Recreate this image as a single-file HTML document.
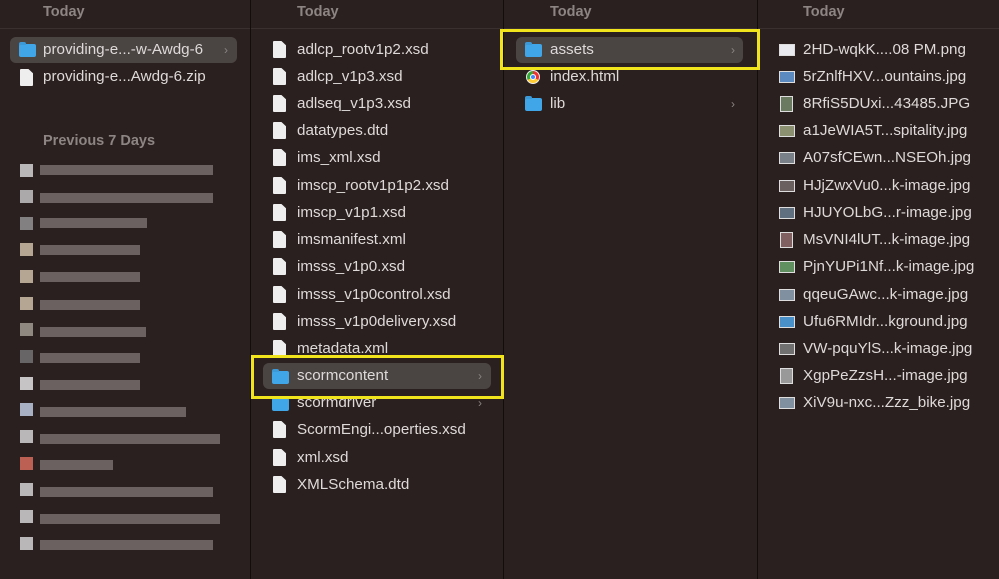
<!DOCTYPE html>
<html><head><meta charset="utf-8"><style>
*{margin:0;padding:0;box-sizing:border-box}
body{width:999px;height:579px;background:#2a201f;position:relative;overflow:hidden;font-family:"Liberation Sans",sans-serif;color:#dedad9;font-size:15.2px}
.a{position:absolute}
.h{font-weight:bold;color:#8d8584;font-size:14.5px}
.t{position:absolute;line-height:18px;white-space:nowrap}
.div{position:absolute;top:0;width:1px;height:579px;background:#120c0b}
.doc{position:absolute;width:13px;height:17px;background:#eeeeee;clip-path:polygon(0 0,65% 0,100% 25%,100% 100%,0 100%);border-radius:1px}
.fold{position:absolute;width:17px;height:13px;background:#41a6e8;border-radius:2px}
.fold:before{content:"";position:absolute;left:0;top:-2px;width:7px;height:3px;background:#3b99d8;border-radius:2px 2px 0 0}
.sel{position:absolute;background:#4a4443;border-radius:6px;height:26px}
.chev{position:absolute;color:#8a8382;font-size:12px;line-height:18px}
.yb{position:absolute;border:3px solid #f2e41c}
.th{position:absolute;width:16px;height:12px;border:1px solid #ddd;background:#8899aa}
.bl{position:absolute;height:10px;background:#7a7271;opacity:.8}
</style></head><body>
<div class="a" style="left:0;top:28px;width:999px;height:1px;background:#3a302f"></div>
<div class="div" style="left:250px"></div>
<div class="div" style="left:503px"></div>
<div class="div" style="left:757px"></div>
<div class="t h" style="left:43px;top:3px">Today</div>
<div class="t h" style="left:297px;top:3px">Today</div>
<div class="t h" style="left:550px;top:3px">Today</div>
<div class="t h" style="left:803px;top:3px">Today</div>

<div class="sel" style="left:10px;top:37px;width:227px"></div>
<div class="fold" style="left:19px;top:44px"></div>
<div class="t" style="left:43px;top:41px">providing-e...-w-Awdg-6</div>
<div class="chev" style="left:224px;top:41px">›</div>
<div class="doc" style="left:20px;top:69px"></div>
<div class="t" style="left:43px;top:68px">providing-e...Awdg-6.zip</div>
<div class="t h" style="left:43px;top:132px">Previous 7 Days</div>

<div class="bl" style="left:20px;top:164px;width:13px;height:13px;background:#ddd"></div><div class="bl" style="left:40px;top:165px;width:173px"></div>
<div class="bl" style="left:20px;top:190px;width:13px;height:13px;background:#ccc"></div><div class="bl" style="left:40px;top:193px;width:173px"></div>
<div class="bl" style="left:20px;top:217px;width:13px;height:13px;background:#999"></div><div class="bl" style="left:40px;top:218px;width:107px"></div>
<div class="bl" style="left:20px;top:243px;width:13px;height:13px;background:#d8c8b0"></div><div class="bl" style="left:40px;top:245px;width:100px"></div>
<div class="bl" style="left:20px;top:270px;width:13px;height:13px;background:#d8c8b0"></div><div class="bl" style="left:40px;top:272px;width:100px"></div>
<div class="bl" style="left:20px;top:297px;width:13px;height:13px;background:#d8c8b0"></div><div class="bl" style="left:40px;top:300px;width:100px"></div>
<div class="bl" style="left:20px;top:323px;width:13px;height:13px;background:#a8a298"></div><div class="bl" style="left:40px;top:327px;width:106px"></div>
<div class="bl" style="left:20px;top:350px;width:13px;height:13px;background:#777"></div><div class="bl" style="left:40px;top:353px;width:100px"></div>
<div class="bl" style="left:20px;top:377px;width:13px;height:13px;background:#eee"></div><div class="bl" style="left:40px;top:380px;width:100px"></div>
<div class="bl" style="left:20px;top:403px;width:13px;height:13px;background:#c8d4ee"></div><div class="bl" style="left:40px;top:407px;width:146px"></div>
<div class="bl" style="left:20px;top:430px;width:13px;height:13px;background:#ddd"></div><div class="bl" style="left:40px;top:434px;width:180px"></div>
<div class="bl" style="left:20px;top:457px;width:13px;height:13px;background:#e07060"></div><div class="bl" style="left:40px;top:460px;width:73px"></div>
<div class="bl" style="left:20px;top:483px;width:13px;height:13px;background:#ddd"></div><div class="bl" style="left:40px;top:487px;width:173px"></div>
<div class="bl" style="left:20px;top:510px;width:13px;height:13px;background:#ddd"></div><div class="bl" style="left:40px;top:514px;width:180px"></div>
<div class="bl" style="left:20px;top:537px;width:13px;height:13px;background:#ddd"></div><div class="bl" style="left:40px;top:540px;width:173px"></div>

<div class="doc" style="left:273px;top:41px"></div><div class="t" style="left:297px;top:41px">adlcp_rootv1p2.xsd</div>
<div class="doc" style="left:273px;top:68px"></div><div class="t" style="left:297px;top:68px">adlcp_v1p3.xsd</div>
<div class="doc" style="left:273px;top:95px"></div><div class="t" style="left:297px;top:95px">adlseq_v1p3.xsd</div>
<div class="doc" style="left:273px;top:122px"></div><div class="t" style="left:297px;top:122px">datatypes.dtd</div>
<div class="doc" style="left:273px;top:149px"></div><div class="t" style="left:297px;top:149px">ims_xml.xsd</div>
<div class="doc" style="left:273px;top:177px"></div><div class="t" style="left:297px;top:177px">imscp_rootv1p1p2.xsd</div>
<div class="doc" style="left:273px;top:204px"></div><div class="t" style="left:297px;top:204px">imscp_v1p1.xsd</div>
<div class="doc" style="left:273px;top:231px"></div><div class="t" style="left:297px;top:231px">imsmanifest.xml</div>
<div class="doc" style="left:273px;top:258px"></div><div class="t" style="left:297px;top:258px">imsss_v1p0.xsd</div>
<div class="doc" style="left:273px;top:286px"></div><div class="t" style="left:297px;top:286px">imsss_v1p0control.xsd</div>
<div class="doc" style="left:273px;top:313px"></div><div class="t" style="left:297px;top:313px">imsss_v1p0delivery.xsd</div>
<div class="doc" style="left:273px;top:340px"></div><div class="t" style="left:297px;top:340px">metadata.xml</div>
<div class="sel" style="left:263px;top:363px;width:228px"></div>
<div class="fold" style="left:272px;top:371px"></div><div class="t" style="left:297px;top:367px">scormcontent</div><div class="chev" style="left:478px;top:367px">›</div>
<div class="fold" style="left:272px;top:398px"></div><div class="t" style="left:297px;top:394px">scormdriver</div><div class="chev" style="left:478px;top:394px">›</div>
<div class="doc" style="left:273px;top:421px"></div><div class="t" style="left:297px;top:421px">ScormEngi...operties.xsd</div>
<div class="doc" style="left:273px;top:449px"></div><div class="t" style="left:297px;top:449px">xml.xsd</div>
<div class="doc" style="left:273px;top:476px"></div><div class="t" style="left:297px;top:476px">XMLSchema.dtd</div>

<div class="sel" style="left:516px;top:37px;width:227px"></div>
<div class="fold" style="left:525px;top:44px"></div><div class="t" style="left:550px;top:41px">assets</div><div class="chev" style="left:731px;top:41px">›</div>
<div class="a" style="left:526px;top:70px;width:14px;height:14px;border-radius:50%;background:conic-gradient(#e33 0 120deg,#fc3 120deg 240deg,#3a3 240deg);border:1px solid #eee"><div class="a" style="left:3px;top:3px;width:6px;height:6px;border-radius:50%;background:#48f;border:1px solid #fff"></div></div>
<div class="t" style="left:550px;top:68px">index.html</div>
<div class="fold" style="left:525px;top:98px"></div><div class="t" style="left:550px;top:95px">lib</div><div class="chev" style="left:731px;top:95px">›</div>

<div class="th" style="left:779px;top:44px;background:#e8eaf0"></div><div class="t" style="left:803px;top:41px">2HD-wqkK....08 PM.png</div>
<div class="th" style="left:779px;top:71px;background:#5a8ac0"></div><div class="t" style="left:803px;top:68px">5rZnlfHXV...ountains.jpg</div>
<div class="th" style="left:780px;top:96px;width:13px;height:16px;background:#6a7a60"></div><div class="t" style="left:803px;top:95px">8RfiS5DUxi...43485.JPG</div>
<div class="th" style="left:779px;top:125px;background:#8a9070"></div><div class="t" style="left:803px;top:122px">a1JeWIA5T...spitality.jpg</div>
<div class="th" style="left:779px;top:152px;background:#7a8088"></div><div class="t" style="left:803px;top:149px">A07sfCEwn...NSEOh.jpg</div>
<div class="th" style="left:779px;top:180px;background:#6a6060"></div><div class="t" style="left:803px;top:177px">HJjZwxVu0...k-image.jpg</div>
<div class="th" style="left:779px;top:207px;background:#607080"></div><div class="t" style="left:803px;top:204px">HJUYOLbG...r-image.jpg</div>
<div class="th" style="left:780px;top:232px;width:13px;height:16px;background:#806060"></div><div class="t" style="left:803px;top:231px">MsVNI4lUT...k-image.jpg</div>
<div class="th" style="left:779px;top:261px;background:#609060"></div><div class="t" style="left:803px;top:258px">PjnYUPi1Nf...k-image.jpg</div>
<div class="th" style="left:779px;top:289px;background:#8090a0"></div><div class="t" style="left:803px;top:286px">qqeuGAwc...k-image.jpg</div>
<div class="th" style="left:779px;top:316px;background:#4a90c8"></div><div class="t" style="left:803px;top:313px">Ufu6RMIdr...kground.jpg</div>
<div class="th" style="left:779px;top:343px;background:#707070"></div><div class="t" style="left:803px;top:340px">VW-pquYlS...k-image.jpg</div>
<div class="th" style="left:780px;top:368px;width:13px;height:16px;background:#999"></div><div class="t" style="left:803px;top:367px">XgpPeZzsH...-image.jpg</div>
<div class="th" style="left:779px;top:397px;background:#8090a0"></div><div class="t" style="left:803px;top:394px">XiV9u-nxc...Zzz_bike.jpg</div>

<div class="yb" style="left:500px;top:29px;width:260px;height:41px"></div>
<div class="yb" style="left:251px;top:355px;width:253px;height:44px"></div>
</body></html>
